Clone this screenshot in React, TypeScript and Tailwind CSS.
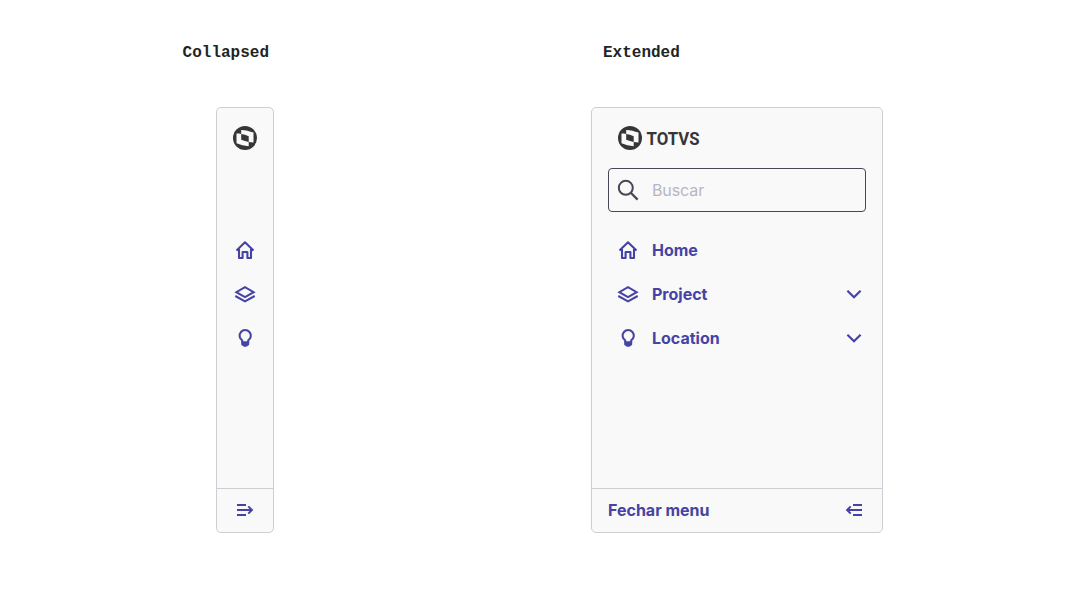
import React from "react";

const stroke = { fill: "none", stroke: "currentColor", strokeWidth: 2 } as const;

function HomeIcon() {
  return (
    <svg viewBox="0 0 24 24" className="size-6 shrink-0" {...stroke}>
      <path d="M3.5 12.6 12 4.3l8.5 8.3M6 11v9h3.6v-6h4.8v6H18v-9" strokeWidth={2.1} strokeLinejoin="round" />
    </svg>
  );
}

function LayersIcon() {
  return (
    <svg viewBox="0 0 24 24" className="size-6 shrink-0" {...stroke}>
      <path d="M12 5.1 3.3 10.2l8.7 5 8.7-5zM2.300 14l9.700 5.300 9.700-5.300" />
    </svg>
  );
}

function BulbIcon() {
  return (
    <svg viewBox="0 0 24 24" className="size-6 shrink-0" {...stroke}>
      <path d="M9.200 16.200v-1.800A5.600 5.600 0 1 1 15.200 14.400v1.800" />
      <path d="M8.200 15.200h8v3c0 1-.8 1.200-1.500 1.500-.5 1.500-4.500 1.500-5 0-.7-.3-1.500-.5-1.500-1.500z" fill="currentColor" stroke="none" />
    </svg>
  );
}

function ChevronIcon() {
  return (
    <svg viewBox="0 0 24 24" className="size-6 shrink-0" {...stroke}>
      <path d="m5.400 8.700 6.600 6.600 6.600-6.600" strokeWidth={2.2} />
    </svg>
  );
}

function SearchIcon() {
  return (
    <svg viewBox="0 0 24 24" className="size-6 shrink-0 text-[#4a4559]" {...stroke}>
      <circle cx="9.8" cy="9.8" r="7" />
      <path d="m14.8 14.8 6.8 6.8" strokeWidth={2.3} />
    </svg>
  );
}

function OpenIcon() {
  return (
    <svg viewBox="0 0 24 24" className="size-6 shrink-0" {...stroke}>
      <path d="M4 7h9M4 12h15M4 17h9M15.300 8.400l3.600 3.600-3.600 3.600" />
    </svg>
  );
}

function CloseIcon() {
  return (
    <svg viewBox="0 0 24 24" className="size-6 shrink-0" {...stroke}>
      <path d="M20 7h-9M20 12H5M20 17h-9M8.700 8.400 5.100 12l3.600 3.600" />
    </svg>
  );
}

function LogoMark() {
  return (
    <svg viewBox="0 0 24 24" className="size-6 shrink-0">
      <circle cx="12" cy="12" r="12" fill="#363636" />
      <path
        fillRule="evenodd"
        fill="#f9f9f9"
        d="M8.200 3.900c4.200.2 8.300 1.100 12.300 2.700v9.800c-1.600 0-3.200-.1-4.800-.4v4.300C11.500 19.900 7.400 18.900 3.500 17.300V7.500c1.600 0 3.200.1 4.700.4zM8.200 8v5.800c2.500 1.100 5 1.800 7.500 2.200v-5.800C13.200 9.100 10.700 8.400 8.200 8z"
      />
    </svg>
  );
}

function Wordmark() {
  return (
    <svg viewBox="0 0 60 32" className="-my-1 h-8 w-[60px] shrink-0 overflow-visible">
      <text
        x="0.600"
        y="22.600"
        textLength="53"
        lengthAdjust="spacingAndGlyphs"
        className="fill-[#363636] font-['Roboto',sans-serif] text-[18.5px] font-bold"
      >
        TOTVS
      </text>
    </svg>
  );
}

function NavItem({ icon, label, expandable = false }: { icon: React.ReactNode; label: string; expandable?: boolean }) {
  return (
    <li className="flex h-11 items-center pr-4 pl-6">
      {icon}
      <span className="ml-3 grow">{label}</span>
      {expandable && <ChevronIcon />}
    </li>
  );
}

const panel = "flex h-[426px] flex-col rounded-[5px] border border-[#cecdd4] bg-[#f9f9f9] text-[#4543a4]";
const heading = "mt-[41px] h-6 font-['Liberation_Mono',monospace] text-base leading-6 font-bold text-[#1c2526]";

export default function App() {
  return (
    <main className="flex h-[600px] w-[1088px] bg-white font-['Inter',sans-serif] text-base leading-6 font-bold">
      <section className="ml-[182px] w-[409px]">
        <h2 className={`ml-[0.6px] ${heading}`}>Collapsed</h2>
        <aside className={`mt-[42px] ml-[34px] w-[58px] ${panel}`}>
          <div className="flex justify-center pt-[18px] pr-px">
            <LogoMark />
          </div>
          <ul className="mt-[78px] grow pr-px">
            <li className="flex h-11 items-center justify-center"><HomeIcon /></li>
            <li className="flex h-11 items-center justify-center"><LayersIcon /></li>
            <li className="flex h-11 items-center justify-center"><BulbIcon /></li>
          </ul>
          <button className="flex h-11 items-center justify-center border-t border-[#cecdd4] pr-px pb-[2px]" aria-label="Abrir menu">
            <OpenIcon />
          </button>
        </aside>
      </section>
      <section className="w-[292px]">
        <h2 className={`ml-3 ${heading}`}>Extended</h2>
        <aside className={`mt-[42px] w-full ${panel}`}>
          <div className="flex gap-1 pt-[18px] pl-[26px]">
            <LogoMark />
            <Wordmark />
          </div>
          <label className="mx-4 mt-[18px] flex h-11 items-center gap-3 rounded-[4px] border border-[#4a4559] px-[7px]">
            <SearchIcon />
            <input
              className="min-w-0 grow bg-transparent font-normal tracking-[-0.1px] outline-none placeholder:text-[#b7b5c3]"
              placeholder="Buscar"
            />
          </label>
          <ul className="mt-4 grow">
            <NavItem icon={<HomeIcon />} label="Home" />
            <NavItem icon={<LayersIcon />} label="Project" expandable />
            <NavItem icon={<BulbIcon />} label="Location" expandable />
          </ul>
          <button className="flex h-11 items-center justify-between border-t border-[#cecdd4] px-4 pb-[2px]">
            Fechar menu
            <CloseIcon />
          </button>
        </aside>
      </section>
    </main>
  );
}
